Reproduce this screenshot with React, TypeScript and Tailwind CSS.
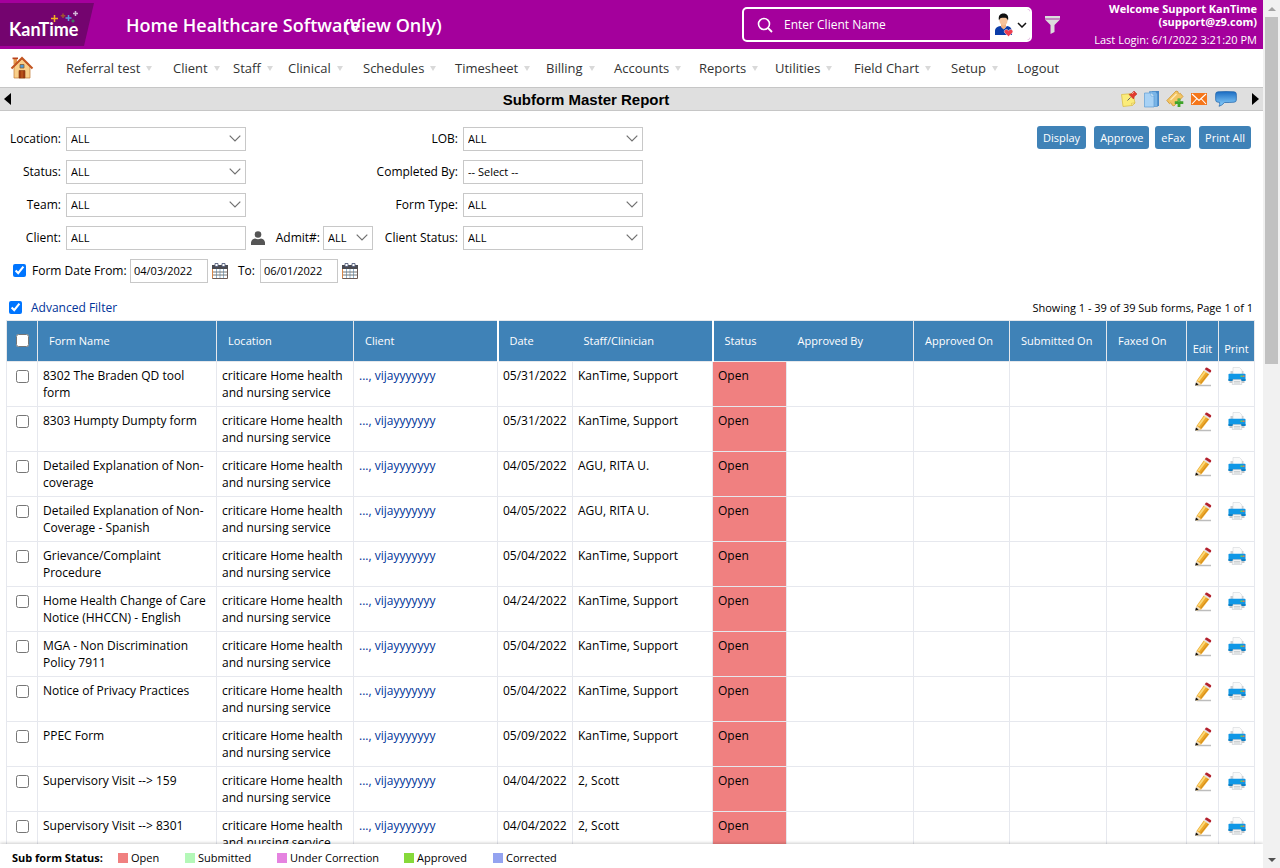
import React from "react";

const NAV = [
  { label: "Referral test", width: "w-[107px]" },
  { label: "Client", width: "w-[60px]" },
  { label: "Staff", width: "w-[55px]" },
  { label: "Clinical", width: "w-[75px]" },
  { label: "Schedules", width: "w-[92px]" },
  { label: "Timesheet", width: "w-[91px]" },
  { label: "Billing", width: "w-[68px]" },
  { label: "Accounts", width: "w-[85px]" },
  { label: "Reports", width: "w-[76px]" },
  { label: "Utilities", width: "w-[79px]" },
  { label: "Field Chart", width: "w-[97px]" },
  { label: "Setup", width: "w-[66px]" },
];

const ROWS = [
  ["8302 The Braden QD tool form", "05/31/2022", "KanTime, Support"],
  ["8303 Humpty Dumpty form", "05/31/2022", "KanTime, Support"],
  ["Detailed Explanation of Non-coverage", "04/05/2022", "AGU, RITA U."],
  ["Detailed Explanation of Non-Coverage - Spanish", "04/05/2022", "AGU, RITA U."],
  ["Grievance/Complaint Procedure", "05/04/2022", "KanTime, Support"],
  ["Home Health Change of Care Notice (HHCCN) - English", "04/24/2022", "KanTime, Support"],
  ["MGA - Non Discrimination Policy 7911", "05/04/2022", "KanTime, Support"],
  ["Notice of Privacy Practices", "05/04/2022", "KanTime, Support"],
  ["PPEC Form", "05/09/2022", "KanTime, Support"],
  ["Supervisory Visit --> 159", "04/04/2022", "2, Scott"],
  ["Supervisory Visit --> 8301", "04/04/2022", "2, Scott"],
];

const LEGEND = [
  { label: "Open", color: "bg-[#f08080]", width: "w-[67px]" },
  { label: "Submitted", color: "bg-[#b4f8b8]", width: "w-[92px]" },
  { label: "Under Correction", color: "bg-[#e583e0]", width: "w-[127px]" },
  { label: "Approved", color: "bg-[#86d93a]", width: "w-[89px]" },
  { label: "Corrected", color: "bg-[#94a3f0]", width: "w-[80px]" },
];

function Logo() {
  return (
    <svg viewBox="0 0 94 43" className="h-[43px] w-[94px] shrink-0" role="img" aria-label="KanTime">
      <path d="M0 0H94L84 43H0Z" fill="#74046f" />
      <text x="9" y="33" fill="#fff" fontFamily="Lato, sans-serif" fontSize="18" fontWeight="700">
        KanTime
      </text>
      <g strokeWidth="1.5" fill="none">
        <path d="M54.500 12v7M51 15.500h7" stroke="#f5b21f" />
        <path d="M63 10.500v4.500M60.800 12.700h4.500" stroke="#a0542f" />
        <path d="M68.500 12v6M65.500 15h6" stroke="#5a9be0" />
        <path d="M75.500 8v5M73 10.500h5" stroke="#d3b8d8" />
        <path d="M73 16.500v3M71.500 18h3" stroke="#3f7d5d" />
      </g>
    </svg>
  );
}

function HomeIcon() {
  return (
    <svg viewBox="0 0 24 24" className="size-6">
      <path d="M3.500 2.500h3.500v6H3.500z" fill="#e79a4e" />
      <path d="M2.500 1.500h5.500v1.700H2.500z" fill="#b8431d" />
      <path d="M4 11 12 3l8 8v11H4Z" fill="#f9cf8a" stroke="#c07a35" strokeWidth=".7" />
      <path d="M1.500 12.500 12 2l10.500 10.500" fill="none" stroke="#c25420" strokeWidth="2" />
      <path d="M10 8.500h4v3.500h-4z" fill="#4a9bdc" stroke="#8a5a2b" strokeWidth=".8" />
      <path d="M9 14.500h6V22H9z" fill="#a33d12" stroke="#7d3513" strokeWidth=".6" />
      <path d="M12 14.500V22" stroke="#d9772c" strokeWidth=".7" />
    </svg>
  );
}

function ClientIcon() {
  return (
    <svg viewBox="0 0 20 24" className="h-6 w-5">
      <path d="M1 22v-4c0-3 2.500-4.500 5.500-5l3.500 3 3-3c3 .5 4.500 2 5 5v4Z" fill="#0b3ca8" />
      <path d="M7 11h5v3l-2.500 2.500L7 14Z" fill="#f0b183" />
      <ellipse cx="9.500" cy="7.500" rx="4" ry="5" fill="#f7c39a" />
      <path d="M5 7.500C4 3 6 .5 9.500.5S15 3 14 7.500C13 4.500 11 4.500 9 4.800 7 4.500 6 5 5 7.500Z" fill="#121212" />
      <path d="M14.500 23.500 10.800 20c-2-3 2-5 3.700-2.300 1.700-2.700 6-.7 3.800 2.300Z" fill="#ee3f50" stroke="#fff" strokeWidth=".5" />
    </svg>
  );
}

function NoteIcon() {
  return (
    <svg viewBox="0 0 18 18" className="size-[18px]">
      <path d="M1.500 4.500 13 3.500l2 9.500-3 2.500-9 1Z" fill="#fbec7a" stroke="#dcc04a" strokeWidth=".8" />
      <path d="m15 13-3.500.3.500 2.200Z" fill="#fff8c4" stroke="#d5b336" strokeWidth=".6" />
      <path d="m7.500 10.500 3-3" stroke="#666" />
      <path d="M9 4.500 13.500 9l.8-2.500L17 4l-3-3-2.500 2.700Z" fill="#e23b2e" stroke="#b3241b" strokeWidth=".5" />
      <path d="m12 4 2-2" stroke="#f79a8e" />
    </svg>
  );
}

function PagesIcon() {
  return (
    <svg viewBox="0 0 18 18" className="size-[18px]">
      <path d="M9 1h7v15H9z" fill="#4687c7" />
      <path d="M6.500 1.500h6l2 2.500v12.500h-8z" fill="#79b4e6" stroke="#4c8dc9" strokeWidth=".6" />
      <path d="M1.500 3h6.500l3 3v11h-9.500z" fill="#a8d2f5" stroke="#5f9fd6" strokeWidth=".7" />
      <path d="M8 3v3h3" fill="#e4f3ff" stroke="#5798d1" strokeWidth=".5" />
    </svg>
  );
}

function TicketIcon() {
  return (
    <svg viewBox="0 0 18 18" className="size-[18px]">
      <path d="M.8 10.500 10 1l2 .7q-.2 2 1.500 2l.7-.5 2.800 3.300-9 9.500-2-1q.2-2-1.500-2l-1 .7Z" fill="#f3c565" stroke="#cf962e" strokeWidth=".8" />
      <path d="m4.500 10 6-6" stroke="#ffe9b5" strokeWidth="1.500" />
      <path d="M13 8.500v8.500M8.800 12.700h8.500" stroke="#3fa32a" strokeWidth="2.800" />
      <path d="M13 9v3" stroke="#7dcc62" />
    </svg>
  );
}

function MailIcon() {
  return (
    <svg viewBox="0 0 16 12" className="h-3 w-4">
      <path d="M0 0h16v12H0z" fill="#f5761a" />
      <path d="m1 1 7 6.500L15 1M1 11l5-5.500M15 11l-5-5.500" fill="none" stroke="#fff" strokeWidth="1.100" />
    </svg>
  );
}

function ChatIcon() {
  return (
    <svg viewBox="0 0 22 16" className="h-4 w-[22px]">
      <defs>
        <linearGradient id="chat" x1="0" y1="0" x2="0" y2="1">
          <stop offset="0" stopColor="#1b6cc2" />
          <stop offset="1" stopColor="#8fd4ff" />
        </linearGradient>
      </defs>
      <path d="M3 .8Q11 .2 19 .8q2.200.2 2.300 2 .2 3.200 0 6.400-.1 1.800-2.300 2-5 .4-9.500.3Q7 14.500 4 15.300q1.300-2 .5-4L3 11.200Q.8 11 .7 9.200q-.2-3.200 0-6.400Q.8 1 3 .8Z" fill="url(#chat)" stroke="#1b60a8" strokeWidth=".7" />
    </svg>
  );
}

function CalendarIcon() {
  return (
    <svg viewBox="0 0 16 17" className="h-[17px] w-4">
      <path d="M.5 3.500h15v13H.5z" fill="#fff" stroke="#6b5a55" />
      <path d="M0 3h16v4H0z" fill="#4a4a50" />
      <path d="M4.500 7v9M8 7v9M11.500 7v9" stroke="#8fb4d0" />
      <path d="M1 10h14M1 13h14" stroke="#777" />
      <path d="M.5 7v9" stroke="#d98748" />
      <path d="M3 1.500h3v3H3zM10 1.500h3v3h-3z" fill="#fff" stroke="#55607e" strokeWidth=".9" />
    </svg>
  );
}

function PencilIcon() {
  return (
    <svg viewBox="0 0 18 20" className="h-5 w-[18px]">
      <path d="M3 18.500h14" stroke="#bdbdbd" strokeWidth="1.500" />
      <path d="M2.500 14 9.800 3.500l5.500 3.700L7.200 17.500l-5 1Z" fill="#eda92a" />
      <path d="m4.300 14 7-9.500" stroke="#fbd97a" strokeWidth="2" />
      <path d="m6.500 16.500 7.800-9.800" stroke="#d08a1d" />
      <path d="m1.500 18.500 1.200-4.800 4.600 3.500Z" fill="#f3dfbc" />
      <path d="m1.200 18.800.7-3.400 2.800 2.200Z" fill="#111" />
      <path d="m9.800 3.500 1.200-1.600 5.500 3.700-1.200 1.600Z" fill="#e2e2e2" />
      <path d="m10.800 2.200 1-1.400q.8-.6 1.600-.1l3.400 2.300q.8.600.3 1.400l-1 1.400Z" fill="#b3202c" />
    </svg>
  );
}

function PrinterIcon() {
  return (
    <svg viewBox="0 0 18 18" className="h-[18px] w-[18px]">
      <path d="M2.500 4h13v4h-13z" fill="#c9cdd2" />
      <path d="M5 .5h6.500L14 3v5H5Z" fill="#fafafa" stroke="#d4d7da" strokeWidth=".6" />
      <path d="M.5 7.500q0-.7.700-.7h15.600q.7 0 .7.700v6H.5Z" fill="#0f97e6" />
      <path d="M.5 12h17v2H.5z" fill="#1180c4" />
      <path d="M1.500 14h3v2h-3zM13.500 14h3v2h-3z" fill="#c3c7cb" />
      <path d="M12.500 8.500h2V10h-2z" fill="#6ed04f" />
      <path d="M14.700 8.500h1.800V10h-1.800z" fill="#f07a4b" />
      <path d="M5 12.500h8l.8 5H4.200Z" fill="#f1f2f3" stroke="#c2c6ca" strokeWidth=".5" />
      <path d="M6 14.500h6M6 16h6" stroke="#b4b9be" strokeWidth=".6" />
    </svg>
  );
}

function PersonIcon() {
  return (
    <svg viewBox="0 0 14 14" className="size-[14px]">
      <circle cx="7" cy="3.500" r="3.300" fill="#555" />
      <path d="M0 14v-2.500Q.5 8 4 7.500q3 1.500 6 0 3.500.5 4 4V14Z" fill="#555" />
    </svg>
  );
}

function SelectBox({ id, width = "w-full" }: { id: string; width?: string }) {
  return (
    <div className={`relative h-6 ${width}`}>
      <select id={id} className="h-6 w-full appearance-none border border-[#c8c8c8] bg-white pl-1 text-[11px] outline-none">
        <option>ALL</option>
      </select>
      <svg viewBox="0 0 12 7" className="pointer-events-none absolute right-[5px] top-2 h-[7px] w-3">
        <path d="m.7.7 5.300 5.300L11.300.7" fill="none" stroke="#707070" strokeWidth="1.200" />
      </svg>
    </div>
  );
}

function FieldLabel({ htmlFor, children }: { htmlFor: string; children: React.ReactNode }) {
  return (
    <label htmlFor={htmlFor} className="flex justify-end whitespace-nowrap">
      {children}
    </label>
  );
}

const TEXT_BOX = "h-6 w-full border border-[#c8c8c8] bg-white pl-1 text-[11px] text-black outline-none";
const DATE_BOX = "h-6 w-[78px] border border-[#c8c8c8] bg-white pl-[3px] text-[11px] outline-none";
const HEAD = "border-y border-[#e6e8ec] pb-[2px] pl-[11px] text-left align-middle font-normal";
const HEAD_LINE = "border-l border-l-[#e6e8ec]";
const CELL = "border border-[#e6e8ee] px-[5px] pt-[5px] align-top";
const ACTION = "h-[23px] rounded-[3px] bg-[#3f82b7] px-[6px] text-[11px] text-white";

export default function App() {
  return (
    <div className="flex h-screen overflow-hidden bg-white font-['Open_Sans',sans-serif] text-[12px] leading-[17px] text-black">
      <div className="flex min-w-0 flex-1 flex-col">
        <header className="flex h-[49px] shrink-0 items-center bg-[#a4009c] text-white">
          <Logo />
          <div className="flex flex-1 items-center pl-8 text-[18px] font-semibold leading-6">
            <h1 className="w-[218px] whitespace-nowrap">Home Healthcare Software</h1>
            <span className="whitespace-nowrap">(View Only)</span>
          </div>
          <div className="flex h-[35px] w-[290px] overflow-hidden rounded-[5px] border-2 border-white">
            <div className="flex flex-1 items-center">
              <svg viewBox="0 0 16 16" className="ml-[13px] size-4 shrink-0">
                <circle cx="7" cy="7" r="5.500" fill="none" stroke="#fff" strokeWidth="1.600" />
                <path d="m11 11 4 4" stroke="#fff" strokeWidth="1.800" />
              </svg>
              <input aria-label="Client name" placeholder="Enter Client Name" className="ml-[11px] w-[190px] bg-transparent text-[12px] text-white outline-none placeholder:text-white" />
            </div>
            <button aria-label="Client type" className="flex w-10 items-center justify-center gap-[3px] bg-white">
              <ClientIcon />
              <svg viewBox="0 0 10 6" className="h-[6px] w-[10px]">
                <path d="m1 1 4 4 4-4" fill="none" stroke="#111" strokeWidth="1.500" />
              </svg>
            </button>
          </div>
          <button aria-label="Filter" className="ml-3">
            <svg viewBox="0 0 17 20" className="h-5 w-[17px]">
              <path d="M1 1h15v3.500L10.500 10v7L6.500 19v-9L1 4.500Z" fill="#dcdcdc" />
              <path d="M1 4h15" stroke="#a4009c" strokeWidth=".8" />
            </svg>
          </button>
          <div className="w-[202px] pr-[6px] text-right">
            <div className="text-[11px] font-bold leading-[13px]">
              Welcome Support KanTime
              <br />
              (support@z9.com)
            </div>
            <div className="pt-1 text-[11px] leading-4">Last Login: 6/1/2022 3:21:20 PM</div>
          </div>
        </header>

        <nav className="flex h-[38px] shrink-0 items-center text-[13px] font-medium text-[#333]">
          <a href="#home" aria-label="Home" className="flex w-[66px] pl-[10px]">
            <HomeIcon />
          </a>
          {NAV.map((item) => (
            <a key={item.label} href="#menu" className={`flex items-center gap-[6px] whitespace-nowrap ${item.width}`}>
              {item.label}
              <svg viewBox="0 0 6 5" className="h-[5px] w-[6px]">
                <path d="M0 0h6L3 5Z" fill="#d9d9d9" />
              </svg>
            </a>
          ))}
          <a href="#logout">Logout</a>
        </nav>

        <div className="flex h-6 shrink-0 items-center border-y border-[#c6c6c6] bg-[#dfdfdf]">
          <div className="flex w-[52px] pl-1">
            <button aria-label="Previous">
              <svg viewBox="0 0 7 12" className="h-3 w-[7px]">
                <path d="M7 0v12L0 6Z" fill="#000" />
              </svg>
            </button>
          </div>
          <h2 className="flex-1 text-center font-['Liberation_Sans',sans-serif] text-[15px] font-bold">Subform Master Report</h2>
          <div className="flex items-center pr-1">
            <button aria-label="Notes" className="mr-[5px]"><NoteIcon /></button>
            <button aria-label="Copy" className="mr-[5px]"><PagesIcon /></button>
            <button aria-label="New ticket" className="mr-[7px]"><TicketIcon /></button>
            <button aria-label="Mail" className="mr-[8px]"><MailIcon /></button>
            <button aria-label="Chat" className="mr-[15px]"><ChatIcon /></button>
            <button aria-label="Next">
              <svg viewBox="0 0 7 12" className="h-3 w-[7px]">
                <path d="M0 0v12l7-6Z" fill="#000" />
              </svg>
            </button>
          </div>
        </div>

        <main className="min-h-0 flex-1 overflow-hidden pt-[11px]">
          <div className="flex items-start justify-between pl-2 pr-3">
            <div>
              <div className="grid auto-rows-[33px] grid-cols-[53px_180px_122px_80px_180px] items-center gap-x-[5px]">
                <FieldLabel htmlFor="location">Location:</FieldLabel>
                <SelectBox id="location" />
                <span />
                <FieldLabel htmlFor="lob">LOB:</FieldLabel>
                <SelectBox id="lob" />

                <FieldLabel htmlFor="status">Status:</FieldLabel>
                <SelectBox id="status" />
                <span />
                <FieldLabel htmlFor="completed">Completed By:</FieldLabel>
                <input id="completed" className={TEXT_BOX} defaultValue="-- Select --" />

                <FieldLabel htmlFor="team">Team:</FieldLabel>
                <SelectBox id="team" />
                <span />
                <FieldLabel htmlFor="formtype">Form Type:</FieldLabel>
                <SelectBox id="formtype" />

                <FieldLabel htmlFor="client">Client:</FieldLabel>
                <input id="client" className={TEXT_BOX} defaultValue="ALL" />
                <div className="flex items-center justify-between">
                  <PersonIcon />
                  <div className="flex items-center gap-[3px]">
                    <label htmlFor="admit">Admit#:</label>
                    <SelectBox id="admit" width="w-[50px]" />
                  </div>
                </div>
                <FieldLabel htmlFor="clientstatus">Client Status:</FieldLabel>
                <SelectBox id="clientstatus" />
              </div>
              <div className="flex h-[33px] items-center pl-[5px]">
                <input id="usedate" type="checkbox" defaultChecked className="mr-[6px] size-[13px] accent-[#0075ff]" />
                <label htmlFor="usedate" className="w-[98px] whitespace-nowrap">Form Date From:</label>
                <input aria-label="From date" defaultValue="04/03/2022" className={DATE_BOX} />
                <button aria-label="Pick from date" className="ml-1"><CalendarIcon /></button>
                <label htmlFor="todate" className="ml-[10px] w-[22px]">To:</label>
                <input id="todate" defaultValue="06/01/2022" className={DATE_BOX} />
                <button aria-label="Pick to date" className="ml-1"><CalendarIcon /></button>
              </div>
            </div>
            <div className="flex pt-1">
              <button className={`${ACTION} mr-2`}>Display</button>
              <button className={`${ACTION} mr-[6px]`}>Approve</button>
              <button className={`${ACTION} mr-2`}>eFax</button>
              <button className={ACTION}>Print All</button>
            </div>
          </div>

          <div className="flex h-[33px] items-center justify-between pl-[9px] pr-[10px] pt-2">
            <div className="flex items-center gap-[9px]">
              <input id="advanced" type="checkbox" defaultChecked className="size-[13px] accent-[#0075ff]" />
              <label htmlFor="advanced" className="text-[#003399]">Advanced Filter</label>
            </div>
            <span className="text-[11px]">Showing 1 - 39 of 39 Sub forms, Page 1 of 1</span>
          </div>

          <div className="pl-[6px] pr-2">
            <table className="w-full table-fixed border-collapse">
              <colgroup>
                <col className="w-[31px]" />
                <col />
                <col className="w-[137px]" />
                <col className="w-[144px]" />
                <col className="w-[75px]" />
                <col className="w-[140px]" />
                <col className="w-[74px]" />
                <col className="w-[127px]" />
                <col className="w-[96px]" />
                <col className="w-[97px]" />
                <col className="w-[80px]" />
                <col className="w-[32px]" />
                <col className="w-[36px]" />
              </colgroup>
              <thead>
                <tr className="h-[41px] bg-[#3f82b7] text-[11px] text-white">
                  <th className="border border-[#e6e8ec] p-0 pb-[2px]">
                    <input type="checkbox" aria-label="Select all forms" className="mx-auto block size-[13px]" />
                  </th>
                  <th className={`${HEAD} ${HEAD_LINE}`}>Form Name</th>
                  <th className={`${HEAD} ${HEAD_LINE}`}>Location</th>
                  <th className={`${HEAD} ${HEAD_LINE}`}>Client</th>
                  <th className={`${HEAD} border-l-2 border-l-white`}>Date</th>
                  <th className={HEAD}>Staff/Clinician</th>
                  <th className={`${HEAD} border-l-2 border-l-white`}>Status</th>
                  <th className={HEAD}>Approved By</th>
                  <th className={`${HEAD} ${HEAD_LINE}`}>Approved On</th>
                  <th className={`${HEAD} ${HEAD_LINE}`}>Submitted On</th>
                  <th className={`${HEAD} ${HEAD_LINE}`}>Faxed On</th>
                  <th className="border border-[#e6e8ec] p-0 pb-1 text-center align-bottom font-normal">Edit</th>
                  <th className="border border-[#e6e8ec] p-0 pb-1 text-center align-bottom font-normal">Print</th>
                </tr>
              </thead>
              <tbody>
                {ROWS.map(([form, date, staff]) => (
                  <tr key={form} className="h-[45px]">
                    <td className="border border-[#e6e8ee] pt-2 align-top">
                      <input type="checkbox" aria-label={form} className="mx-auto block size-[13px]" />
                    </td>
                    <td className={CELL}>{form}</td>
                    <td className={CELL}>criticare Home health and nursing service</td>
                    <td className={CELL}>
                      <a href="#client" className="text-[#003399]">..., vijayyyyyyy</a>
                    </td>
                    <td className={`${CELL} whitespace-nowrap`}>{date}</td>
                    <td className={CELL}>{staff}</td>
                    <td className={`${CELL} bg-[#f08080]`}>Open</td>
                    <td className={CELL} />
                    <td className={CELL} />
                    <td className={CELL} />
                    <td className={CELL} />
                    <td className="border border-[#e6e8ee] pt-[5px] align-top">
                      <button aria-label="Edit" className="mx-auto block"><PencilIcon /></button>
                    </td>
                    <td className="border border-[#e6e8ee] pt-[5px] align-top">
                      <button aria-label="Print" className="mx-auto block"><PrinterIcon /></button>
                    </td>
                  </tr>
                ))}
              </tbody>
            </table>
          </div>
        </main>

        <footer className="flex h-6 shrink-0 items-center bg-white pl-3 pt-[3px] text-[11px] shadow-[0_-1px_3px_rgba(0,0,0,0.2)]">
          <span className="w-[106px] font-bold">Sub form Status:</span>
          {LEGEND.map((item) => (
            <span key={item.label} className={`flex items-center gap-[3px] whitespace-nowrap ${item.width}`}>
              <span className={`size-[10px] ${item.color}`} />
              {item.label}
            </span>
          ))}
        </footer>
      </div>

      <div className="flex w-[17px] shrink-0 flex-col items-center bg-[#f1f1f1]" aria-hidden="true">
        <div className="flex h-[17px] items-center">
          <svg viewBox="0 0 8 4" className="h-1 w-2"><path d="M0 4h8L4 0Z" fill="#a3a3a3" /></svg>
        </div>
        <div className="h-[347px] w-[13px] bg-[#c1c1c1]" />
        <div className="mt-auto flex h-[17px] items-center">
          <svg viewBox="0 0 8 4" className="h-1 w-2"><path d="M0 0h8L4 4Z" fill="#505050" /></svg>
        </div>
      </div>
    </div>
  );
}
